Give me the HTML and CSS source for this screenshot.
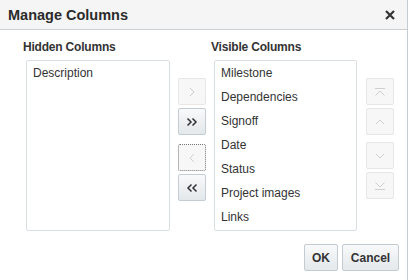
FILE: index.html
```html
<!DOCTYPE html>
<html lang="en">
<head>
  <meta charset="UTF-8">
  <title>Manage Columns</title>
  <link rel="stylesheet" href="styles.css">
</head>
<body>
  <div class="dialog">
    <div class="dialog-header">
      <span class="dialog-title">Manage Columns</span>
      <svg class="close" width="10" height="10" viewBox="0 0 10 10"><path d="M1 1 L9 9 M9 1 L1 9" /></svg>
    </div>

    <div class="dialog-body">
      <div class="list-col first">
        <div class="list-label">Hidden Columns</div>
        <div class="list-box">
          <div class="list-item">Description</div>
        </div>
      </div>

      <div class="btn-col">
        <div class="btn-group">
          <div class="icon-btn disabled">
            <svg width="14" height="14" viewBox="0 0 14 14"><path d="M5 3 L9 7 L5 11" /></svg>
          </div>
          <div class="icon-btn">
            <svg width="14" height="14" viewBox="0 0 14 14"><path d="M2.5 3.5 L6 7 L2.5 10.5 M7.5 3.5 L11 7 L7.5 10.5" /></svg>
          </div>
        </div>
        <div class="btn-group">
          <div class="icon-btn disabled focused">
            <svg width="14" height="14" viewBox="0 0 14 14"><path d="M9 3 L5 7 L9 11" /></svg>
          </div>
          <div class="icon-btn">
            <svg width="14" height="14" viewBox="0 0 14 14"><path d="M6.5 3.5 L3 7 L6.5 10.5 M11.5 3.5 L8 7 L11.5 10.5" /></svg>
          </div>
        </div>
      </div>

      <div class="list-col">
        <div class="list-label">Visible Columns</div>
        <div class="list-box">
          <div class="list-item">Milestone</div>
          <div class="list-item">Dependencies</div>
          <div class="list-item">Signoff</div>
          <div class="list-item">Date</div>
          <div class="list-item">Status</div>
          <div class="list-item">Project images</div>
          <div class="list-item">Links</div>
        </div>
      </div>

      <div class="btn-col right">
        <div class="btn-group">
          <div class="icon-btn disabled">
            <svg width="14" height="14" viewBox="0 0 14 14"><path d="M2 3.5 H12 M2.5 10.5 L7 6 L11.5 10.5" /></svg>
          </div>
          <div class="icon-btn disabled">
            <svg width="14" height="14" viewBox="0 0 14 14"><path d="M3 9 L7 5 L11 9" /></svg>
          </div>
        </div>
        <div class="btn-group">
          <div class="icon-btn disabled">
            <svg width="14" height="14" viewBox="0 0 14 14"><path d="M3 5 L7 9 L11 5" /></svg>
          </div>
          <div class="icon-btn disabled">
            <svg width="14" height="14" viewBox="0 0 14 14"><path d="M2.5 3.5 L7 8 L11.5 3.5 M2 10.5 H12" /></svg>
          </div>
        </div>
      </div>
    </div>

    <div class="dialog-footer">
      <button class="text-btn ok">OK</button>
      <button class="text-btn cancel">Cancel</button>
    </div>
  </div>
</body>
</html>
```

FILE: styles.css
```css
body {
  margin: 0;
  background: #fff;
  font-family: "Liberation Sans", Arial, sans-serif;
  color: #333;
}
.dialog {
  width: 407px;
  height: 280px;
  border-right: 1px solid #c4ccd3;
  background: #fff;
}
.dialog-header {
  height: 29px;
  background: #f5f5f5;
  border-bottom: 1px solid #c9d1d7;
  display: flex;
  align-items: center;
  justify-content: space-between;
  padding: 0 12px 0 8px;
}
.dialog-title {
  font-size: 14.5px;
  font-weight: bold;
  color: #2b2b2b;
}
.close path {
  fill: none;
  stroke: #333;
  stroke-width: 2.2;
}
.dialog-body {
  display: flex;
  padding-top: 10px;
}
.list-col {
  width: 146px;
}
.list-col.first {
  margin-left: 23px;
  width: 147px;
}
.list-label {
  font-size: 12px;
  font-weight: bold;
  line-height: 15px;
  margin-bottom: 5px;
  letter-spacing: -0.2px;
}
.list-box {
  margin-left: 3px;
  height: 169px;
  border: 1px solid #d9dfe3;
  border-radius: 2px;
}
.list-item {
  font-size: 12px;
  line-height: 24px;
  padding-left: 6px;
  color: #333;
}
.btn-col {
  padding-top: 38px;
  margin: 0 5px 0 8px;
  display: flex;
  flex-direction: column;
  gap: 9px;
}
.btn-col.right {
  margin: 0 0 0 9px;
  gap: 7px;
}
.btn-group {
  display: flex;
  flex-direction: column;
  gap: 3px;
}
.icon-btn {
  width: 26px;
  height: 25px;
  border: 1px solid #c4ccd3;
  border-radius: 2px;
  background: linear-gradient(#f8f9fa, #e3e8eb);
  display: flex;
  align-items: center;
  justify-content: center;
}
.icon-btn svg path {
  fill: none;
  stroke: #333;
  stroke-width: 1.5;
}
.icon-btn.disabled {
  background: #f7f7f7;
  border-color: #e6e6e6;
}
.icon-btn.disabled svg path {
  stroke: #cfcfcf;
  stroke-width: 1;
}
.icon-btn.focused {
  border: 1px dotted #777;
}
.dialog-footer {
  display: flex;
  justify-content: flex-end;
  gap: 4px;
  padding: 13px 8px 0 0;
}
.text-btn {
  height: 27px;
  padding: 0;
  font-family: "Liberation Sans", Arial, sans-serif;
  font-size: 12px;
  font-weight: bold;
  color: #333;
  border: 1px solid #c4ccd3;
  border-radius: 2px;
  background: linear-gradient(#f8f9fa, #e3e8eb);
}
.text-btn.ok {
  width: 34px;
}
.text-btn.cancel {
  width: 57px;
}
```
